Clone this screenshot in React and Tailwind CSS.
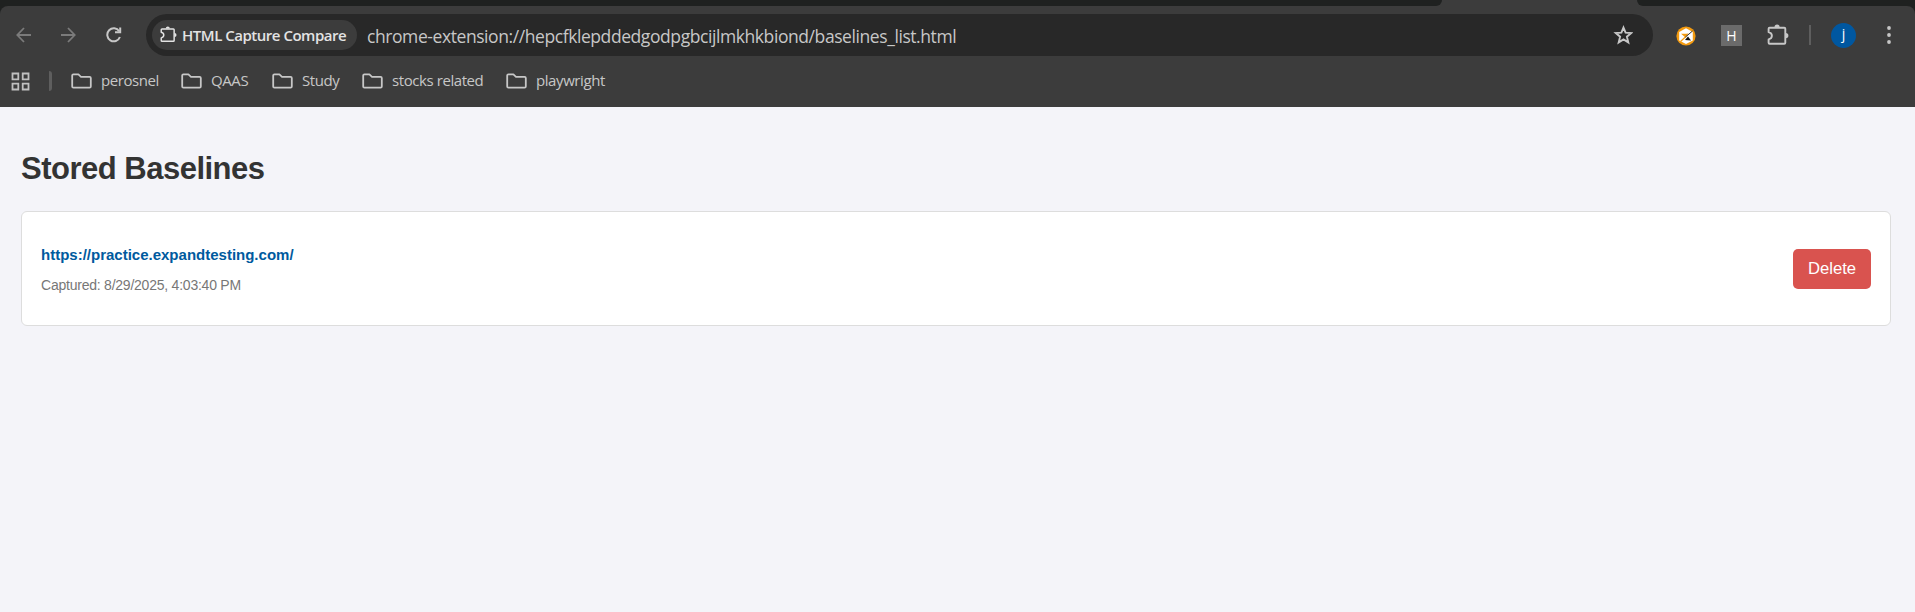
const Puzzle = ({ className }) => (
  <svg viewBox="0 0 22 22" className={className} fill="none">
    <path d="M2.6 3.8H17.3Q18.3 3.8 18.3 4.8V18.8Q18.3 19.8 17.3 19.8H2.6Q1.6 19.8 1.6 18.8V15.4Q4.9 14.6 4.9 11.8T1.6 8.2V4.8Q1.6 3.8 2.6 3.8Z" stroke="currentColor" strokeWidth="1.9" strokeLinejoin="round" />
    <path d="M7.5 3.2a2.6 2.6 0 0 1 5.2 0ZM18.8 9a2.6 2.6 0 0 1 0 5.2Z" fill="currentColor" />
  </svg>
);

const Folder = () => (
  <svg viewBox="0 0 21 16" className="h-4 w-[21px] shrink-0" fill="none" stroke="#c7c7c7" strokeWidth="1.8">
    <path d="M2.4 1.4H7.4L10 3.8H18.6Q19.8 3.8 19.8 5V13.4Q19.8 14.6 18.6 14.6H2.4Q1.2 14.6 1.2 13.4V2.6Q1.2 1.4 2.4 1.4Z" strokeLinejoin="round" />
  </svg>
);

const Bookmark = ({ label, className }) => (
  <div className={"flex shrink-0 items-center gap-[9px] " + className}>
    <Folder />
    <span className="-mt-0.5 whitespace-nowrap text-[15px] leading-5 tracking-[-0.42px] text-[#c7c7c7]">{label}</span>
  </div>
);

const TabStrip = () => (
  <div className="flex h-1.5 justify-between bg-[#3c3c3c]">
    <div className="w-[1442px] rounded-br-[10px] bg-[#1f2120]" />
    <div className="w-[278px] rounded-bl-[10px] bg-[#1f2120]" />
  </div>
);

const Toolbar = () => (
  <div className="bg-[#1f2120]">
    <div className="h-[101px] rounded-t-[8px] bg-[#3c3c3c] pt-2 font-['Open_Sans',sans-serif]">
      <div className="flex h-[42px] items-center">
        <svg viewBox="0 0 16 16" className="ml-4 size-4 shrink-0" fill="none" stroke="#7b7b7b" strokeWidth="1.8">
          <path d="M15 8H1.5M8 1L1.3 8L8 15" />
        </svg>
        <svg viewBox="0 0 16 16" className="ml-[29px] size-4 shrink-0" fill="none" stroke="#7b7b7b" strokeWidth="1.8">
          <path d="M0 8H13.5M7 1L13.7 8L7 15" />
        </svg>
        <svg viewBox="0 0 16 16" className="ml-[29px] size-4 shrink-0" fill="none" stroke="#c7c7c7" strokeWidth="2">
          <path d="M13.9 10A6.5 6.5 0 1 1 13.2 4.2" />
          <path d="M14.2 0.5V5.3H9" />
        </svg>
        <div className="ml-6 flex h-[42px] w-[1507px] shrink-0 items-center rounded-full bg-[#282828] pl-1.5 pr-5">
          <div className="flex h-[30px] w-[205px] shrink-0 items-center rounded-full bg-[#3c3c3c] pl-2">
            <Puzzle className="-mt-0.5 size-[17px] shrink-0 text-[#e3e3e3]" />
            <span className="-mt-px ml-[5px] whitespace-nowrap text-[15px] font-semibold leading-5 tracking-[-0.48px] text-[#e3e3e3]">HTML Capture Compare</span>
          </div>
          <span className="ml-2.5 mt-px whitespace-nowrap text-[17.5px] leading-6 tracking-[-0.42px] text-[#c7c7c7]">chrome-extension://hepcfklepddedgodpgbcijlmkhkbiond/baselines_list.html</span>
          <svg viewBox="0 0 20 20" className="ml-auto size-5 shrink-0" fill="none" stroke="#c7c7c7" strokeWidth="1.9">
            <path d="M10.5 2.6L12.6 7.7L18.2 8.1L13.9 11.7L15.3 17.4L10.5 14.4L5.7 17.4L7.1 11.7L2.8 8.1L8.4 7.7Z" />
          </svg>
        </div>
        <svg viewBox="0 0 20 20" className="ml-[23px] mt-px size-5 shrink-0">
          <circle cx="10" cy="10" r="9.6" fill="#f29a10" />
          <path d="M10 2.3L16.8 6V14.4L10 18L3.2 14.4V6Z" fill="#fff" />
          <path d="M5 7.8H10L12.5 7.5L9.5 11.5Z" fill="#f29a10" />
          <path d="M4.5 15.5L10 10.5" stroke="#f29a10" strokeWidth="1.2" />
          <path d="M9.5 11L16.5 5" stroke="#333" strokeWidth="1" />
          <path d="M9 14L12 10.5L15 14.5Z" fill="#111" />
        </svg>
        <div className="ml-[25px] mt-px flex size-[21px] shrink-0 items-center justify-center bg-[#6b6b6b] text-[14px] leading-none text-white">H</div>
        <Puzzle className="ml-[25px] -mt-px size-[22px] shrink-0 text-[#c7c7c7]" />
        <div className="ml-5 h-5 w-0.5 shrink-0 bg-[#5e5e5e]" />
        <div className="ml-5 flex size-[25px] shrink-0 items-center justify-center rounded-full bg-[#0057a0] pb-[3px] text-[14px] leading-none text-white">j</div>
        <svg viewBox="0 0 4 18" className="ml-[31px] h-[18px] w-1 shrink-0" fill="#c7c7c7">
          <circle cx="2" cy="2" r="1.9" />
          <circle cx="2" cy="9" r="1.9" />
          <circle cx="2" cy="16" r="1.9" />
        </svg>
      </div>
      <div className="mt-[13px] flex h-6 items-center">
        <svg viewBox="0 0 19 19" className="ml-[11px] size-[19px] shrink-0" fill="none" stroke="#c0c0c0" strokeWidth="1.8">
          <path d="M1.5 1.5h5.8v5.8h-5.8zM11.7 1.5h5.8v5.8h-5.8zM1.5 11.7h5.8v5.8h-5.8zM11.7 11.7h5.8v5.8h-5.8z" />
        </svg>
        <div className="ml-[19px] h-5 w-[3px] rounded-r-sm bg-[#5e5e5e]" />
        <Bookmark label="perosnel" className="ml-[19px] w-[110px]" />
        <Bookmark label="QAAS" className="w-[91px]" />
        <Bookmark label="Study" className="w-[90px]" />
        <Bookmark label="stocks related" className="w-[144px]" />
        <Bookmark label="playwright" className="" />
      </div>
    </div>
  </div>
);

export default function App() {
  return (
    <div className="flex h-screen flex-col overflow-hidden bg-[#f4f4f9] font-['Liberation_Sans',Arial,sans-serif]">
      <TabStrip />
      <Toolbar />
      <main className="pl-[21px] pr-6 pt-[44px]">
        <h1 className="text-[31px] font-bold leading-[35px] tracking-[-0.5px] text-[#333]">Stored Baselines</h1>
        <div className="mt-[25px] flex h-[115px] items-center justify-between rounded-[6px] border border-[#ddd] bg-white px-[19px]">
          <div className="pt-[3px]">
            <div className="text-[15px] font-bold leading-[18px] text-[#005a9e]">https://practice.expandtesting.com/</div>
            <div className="mt-3 text-[14px] leading-[18px] tracking-[-0.23px] text-[#777]">Captured: 8/29/2025, 4:03:40 PM</div>
          </div>
          <button className="h-10 w-[78px] rounded-[5px] bg-[#d9534f] text-[16.67px] leading-5 text-white">Delete</button>
        </div>
      </main>
    </div>
  );
}
